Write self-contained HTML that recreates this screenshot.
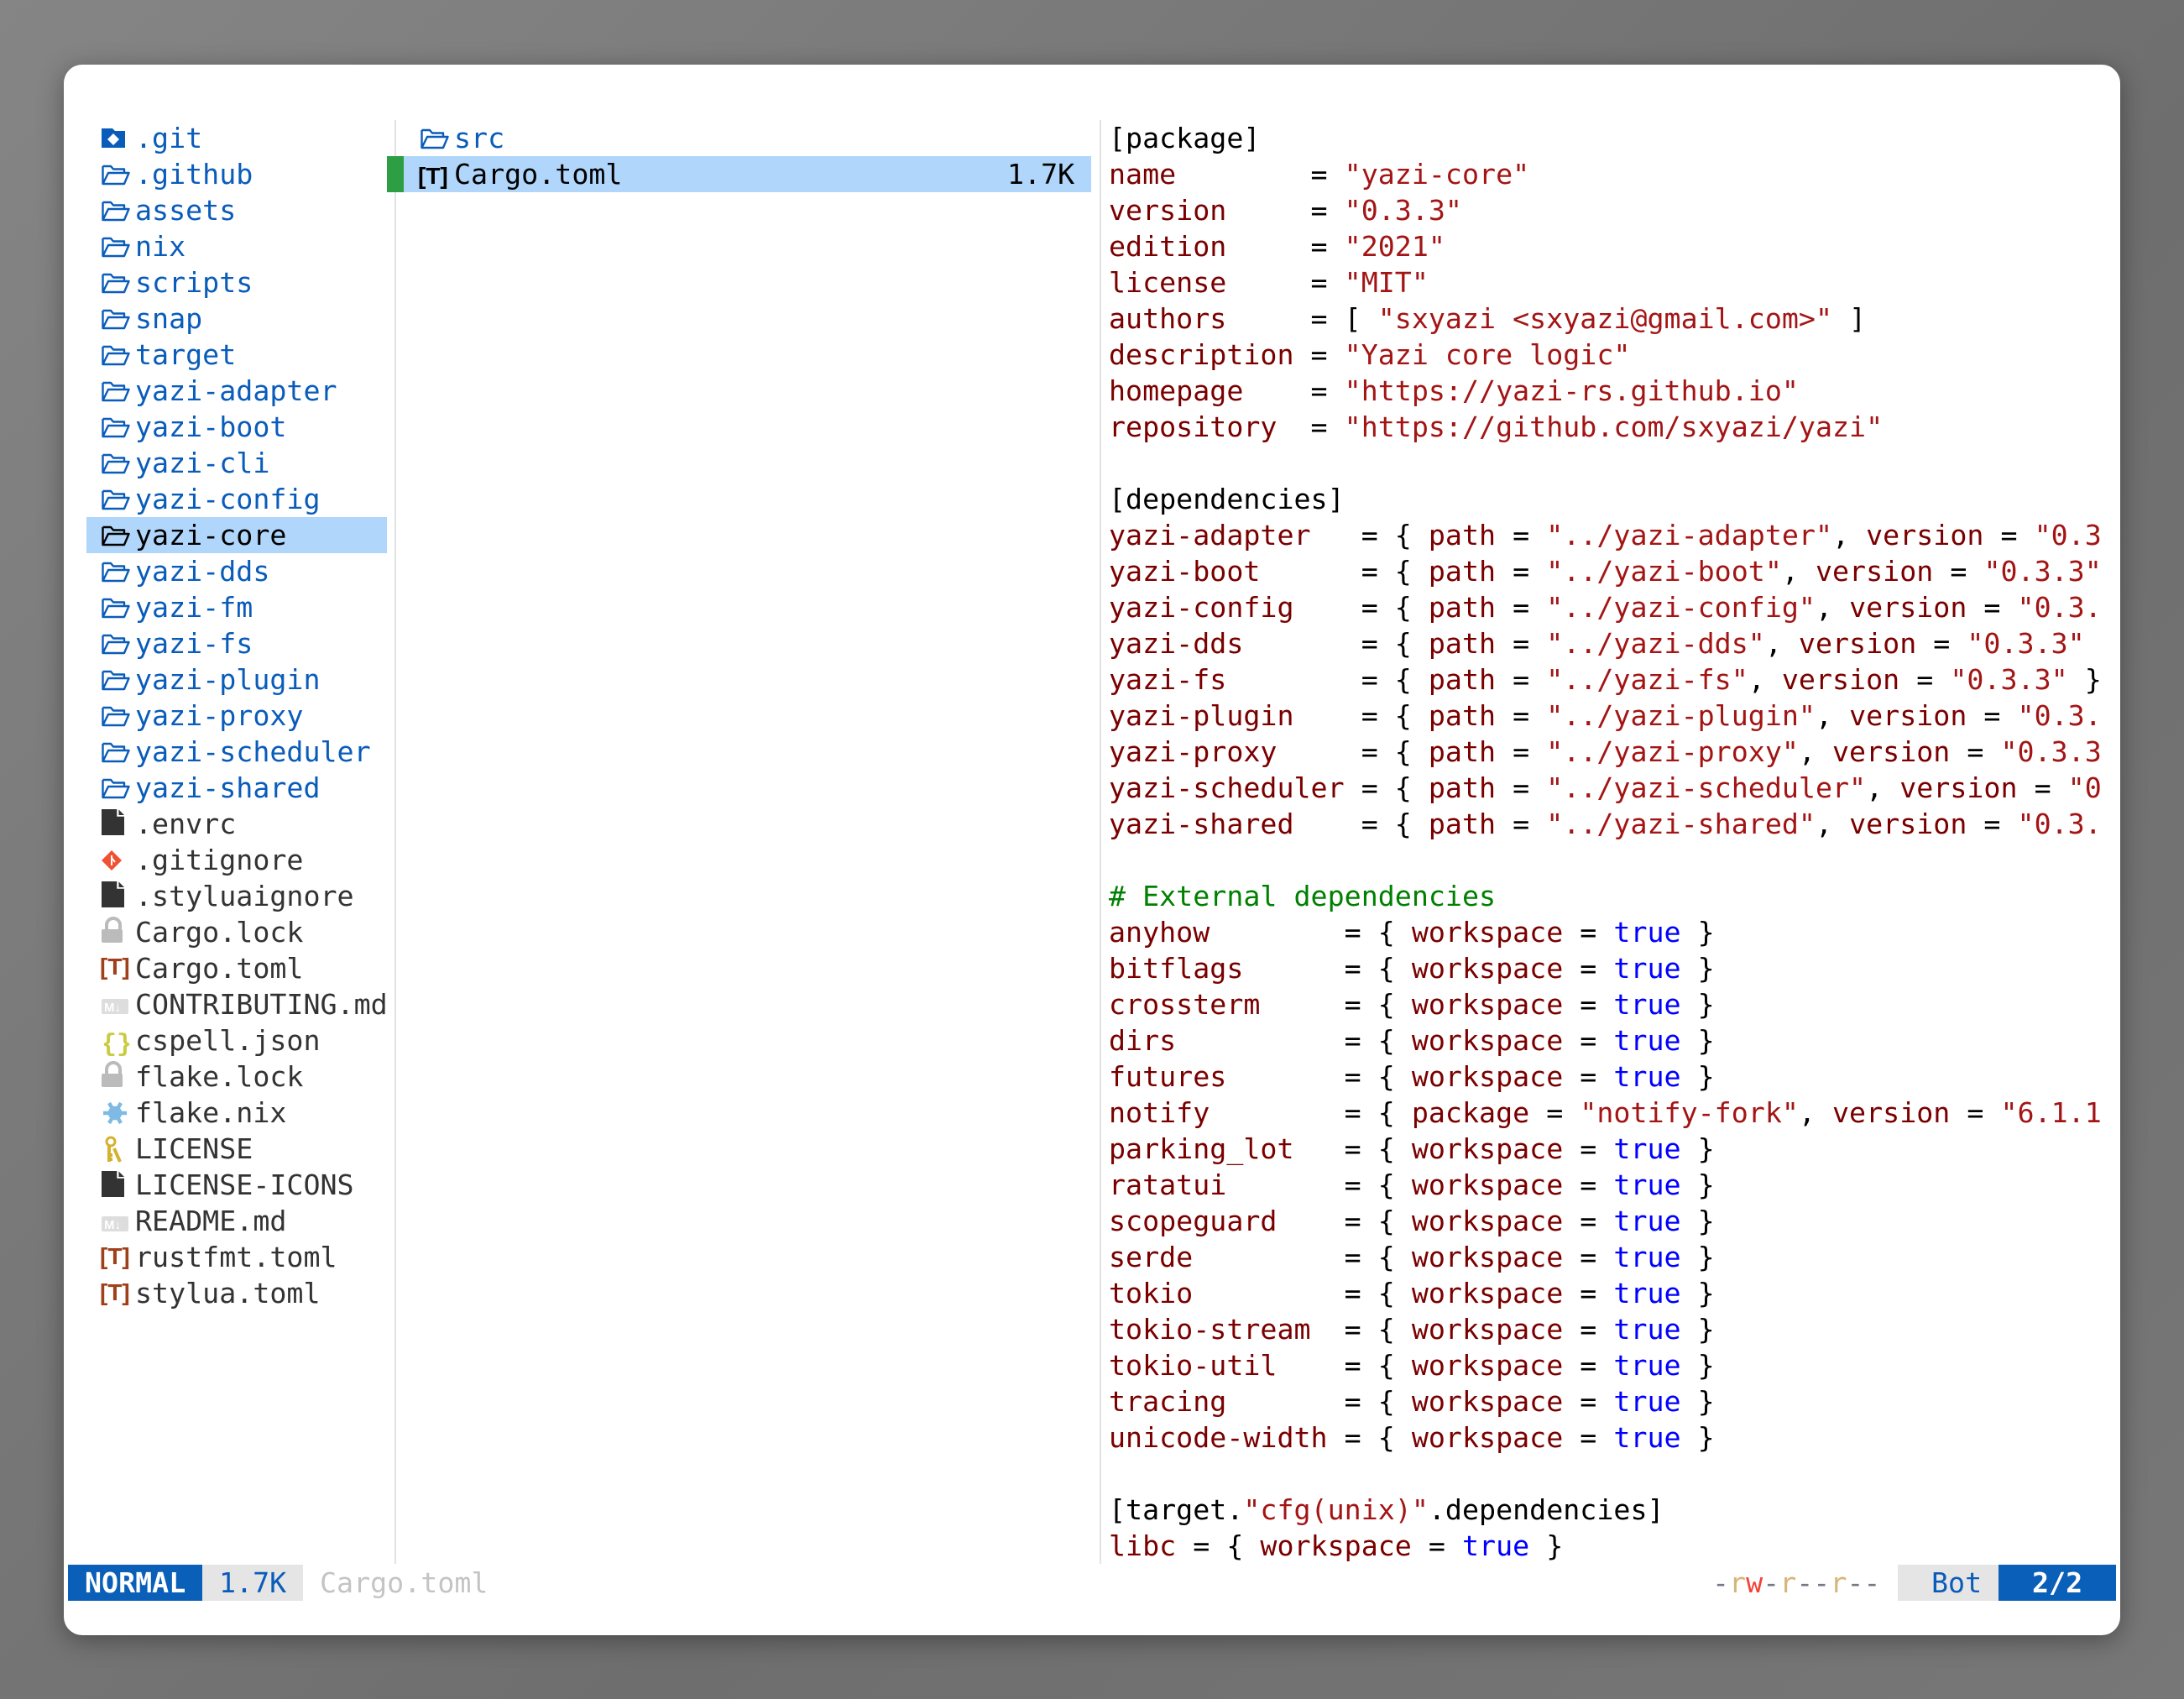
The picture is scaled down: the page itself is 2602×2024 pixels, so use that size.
<!DOCTYPE html>
<html><head><meta charset="utf-8">
<style>
html,body{margin:0;padding:0}
body{width:2602px;height:2024px;background:linear-gradient(135deg,#858585,#6e6e6e 60%,#777);position:relative;overflow:hidden;font-family:"Liberation Mono","DejaVu Sans Mono",monospace;}
.win{position:absolute;left:76px;top:77px;width:2450px;height:1871px;background:#fff;border-radius:22px;box-shadow:0 6px 30px rgba(0,0,0,.35);overflow:hidden}
.t{position:absolute;font-size:33.3px;line-height:43px;white-space:pre;margin:0}
.d{color:#0a5cba}
.f{color:#333}
.k{color:#7a0000}.s{color:#a31515}.b{color:#0000ff}.c{color:#008000}.n{color:#000}
svg{position:absolute}
</style></head><body>
<div class="win"></div>

<div style="position:absolute;left:103px;top:616px;width:358px;height:43px;background:#b0d6fb"></div>
<div style="position:absolute;left:470px;top:143px;width:2px;height:1720px;background:#e2e2e2"></div>
<div style="position:absolute;left:1310px;top:143px;width:2px;height:1720px;background:#e2e2e2"></div>
<div style="position:absolute;left:461px;top:186px;width:20px;height:43px;background:#2e9e44"></div>
<div style="position:absolute;left:481px;top:186px;width:819px;height:43px;background:#b0d6fb"></div>

<svg width="2602" height="2024" style="left:0;top:0">
<defs>
<g id="fold"><path d="M1.5 4 V25 H27 L32.5 12 H8 L1.5 25 M1.5 4 H11 L14 7.5 H27 V12" fill="none" stroke="#0a5cba" stroke-width="2.4" stroke-linejoin="round"/></g>
<g id="file"><path d="M0 0 H19 L27 8 V31 H0 Z" fill="#333"/><path d="M19 0 V8 H27" fill="#fff" stroke="#fff" stroke-width="1.5"/><path d="M20.5 0.5 L27 7 H20.5Z" fill="#333"/></g>
<g id="tom"><text x="0" y="24" font-family="Liberation Sans,sans-serif" font-weight="bold" font-size="28" fill="#a0401a">[T]</text></g>
<g id="md"><rect x="0" y="0" width="32" height="18" rx="2" fill="#ddd"/><text x="3" y="15" font-family="Liberation Sans,sans-serif" font-weight="bold" font-size="15" fill="#fff">M↓</text></g>
<g id="lock"><path d="M6 13 V8 A8 8 0 0 1 22 8 V13" fill="none" stroke="#bbb" stroke-width="4"/><rect x="0" y="13" width="25" height="16" rx="2" fill="#bbb"/></g>
</defs>
<g transform="translate(121,153)"><path d="M0 0 H13 L16 3 H28 V23 H0Z" fill="#0a5cba"/><path d="M14 6 L21 13 L14 20 L7 13Z" fill="#fff"/></g>
<use href="#fold" transform="translate(121,194)"/>
<use href="#fold" transform="translate(121,237)"/>
<use href="#fold" transform="translate(121,280)"/>
<use href="#fold" transform="translate(121,323)"/>
<use href="#fold" transform="translate(121,366)"/>
<use href="#fold" transform="translate(121,409)"/>
<use href="#fold" transform="translate(121,452)"/>
<use href="#fold" transform="translate(121,495)"/>
<use href="#fold" transform="translate(121,538)"/>
<use href="#fold" transform="translate(121,581)"/>
<g transform="translate(121,624)"><path d="M1.5 4 V25 H27 L32.5 12 H8 L1.5 25 M1.5 4 H11 L14 7.5 H27 V12" fill="none" stroke="#000" stroke-width="2.4" stroke-linejoin="round"/></g>
<use href="#fold" transform="translate(121,667)"/>
<use href="#fold" transform="translate(121,710)"/>
<use href="#fold" transform="translate(121,753)"/>
<use href="#fold" transform="translate(121,796)"/>
<use href="#fold" transform="translate(121,839)"/>
<use href="#fold" transform="translate(121,882)"/>
<use href="#fold" transform="translate(121,925)"/>
<use href="#file" transform="translate(121,964)"/>
<g transform="translate(121,1013)"><path d="M12 0 L24 12 L12 24 L0 12Z" fill="#f05033"/><path d="M12 6 V18 M12 9 L16 14" stroke="#fff" stroke-width="2"/></g>
<use href="#file" transform="translate(121,1050)"/>
<use href="#lock" transform="translate(121,1094)"/>
<use href="#tom" transform="translate(119,1137)"/>
<use href="#md" transform="translate(121,1190)"/>
<text x="121" y="1252" font-family="Liberation Mono,monospace" font-weight="bold" font-size="30" fill="#cbcb41">{}</text>
<use href="#lock" transform="translate(121,1266)"/>
<g transform="translate(137,1326)" stroke="#7ebae4" stroke-width="4.5" fill="none"><path d="M-14 0 H14 M-7 -12 L7 12 M7 -12 L-7 12"/><circle r="6"/></g>
<g transform="translate(124,1354)"><circle cx="8" cy="6" r="5" fill="none" stroke="#d4b12e" stroke-width="3"/><path d="M6 11 V30 M6 22 H10 M6 27 H10 M12 14 L19 30" stroke="#d4b12e" stroke-width="4"/></g>
<use href="#file" transform="translate(121,1395)"/>
<use href="#md" transform="translate(121,1449)"/>
<use href="#tom" transform="translate(119,1482)"/>
<use href="#tom" transform="translate(119,1525)"/>
<use href="#fold" transform="translate(501,151)"/>
<text x="498" y="219" font-family="Liberation Sans,sans-serif" font-weight="bold" font-size="28" fill="#000">[T]</text>
</svg>

<pre class="t" style="left:161px;top:143px"><span class="d">.git
.github
assets
nix
scripts
snap
target
yazi-adapter
yazi-boot
yazi-cli
yazi-config
</span><span class="n">yazi-core</span><span class="d">
yazi-dds
yazi-fm
yazi-fs
yazi-plugin
yazi-proxy
yazi-scheduler
yazi-shared
</span><span class="f">.envrc
.gitignore
.styluaignore
Cargo.lock
Cargo.toml
CONTRIBUTING.md
cspell.json
flake.lock
flake.nix
LICENSE
LICENSE-ICONS
README.md
rustfmt.toml
stylua.toml</span></pre>

<pre class="t" style="left:541px;top:143px"><span class="d">src</span>
<span class="n">Cargo.toml</span></pre>
<pre class="t n" style="left:1200px;top:186px">1.7K</pre>

<div style="position:absolute;left:1321px;top:143px;width:1185px;height:1720px;overflow:hidden">
<pre class="t n" style="left:0;top:0">[package]
<span class="k">name</span>        = <span class="s">"yazi-core"</span>
<span class="k">version</span>     = <span class="s">"0.3.3"</span>
<span class="k">edition</span>     = <span class="s">"2021"</span>
<span class="k">license</span>     = <span class="s">"MIT"</span>
<span class="k">authors</span>     = [ <span class="s">"sxyazi &lt;sxyazi@gmail.com&gt;"</span> ]
<span class="k">description</span> = <span class="s">"Yazi core logic"</span>
<span class="k">homepage</span>    = <span class="s">"https://yazi-rs.github.io"</span>
<span class="k">repository</span>  = <span class="s">"https://github.com/sxyazi/yazi"</span>

[dependencies]
<span class="k">yazi-adapter</span>   = { <span class="k">path</span> = <span class="s">"../yazi-adapter"</span>, <span class="k">version</span> = <span class="s">"0.3.3"</span> }
<span class="k">yazi-boot</span>      = { <span class="k">path</span> = <span class="s">"../yazi-boot"</span>, <span class="k">version</span> = <span class="s">"0.3.3"</span> }
<span class="k">yazi-config</span>    = { <span class="k">path</span> = <span class="s">"../yazi-config"</span>, <span class="k">version</span> = <span class="s">"0.3.3"</span> }
<span class="k">yazi-dds</span>       = { <span class="k">path</span> = <span class="s">"../yazi-dds"</span>, <span class="k">version</span> = <span class="s">"0.3.3"</span> }
<span class="k">yazi-fs</span>        = { <span class="k">path</span> = <span class="s">"../yazi-fs"</span>, <span class="k">version</span> = <span class="s">"0.3.3"</span> }
<span class="k">yazi-plugin</span>    = { <span class="k">path</span> = <span class="s">"../yazi-plugin"</span>, <span class="k">version</span> = <span class="s">"0.3.3"</span> }
<span class="k">yazi-proxy</span>     = { <span class="k">path</span> = <span class="s">"../yazi-proxy"</span>, <span class="k">version</span> = <span class="s">"0.3.3"</span> }
<span class="k">yazi-scheduler</span> = { <span class="k">path</span> = <span class="s">"../yazi-scheduler"</span>, <span class="k">version</span> = <span class="s">"0.3.3"</span> }
<span class="k">yazi-shared</span>    = { <span class="k">path</span> = <span class="s">"../yazi-shared"</span>, <span class="k">version</span> = <span class="s">"0.3.3"</span> }

<span class="c"># External dependencies</span>
<span class="k">anyhow</span>        = { <span class="k">workspace</span> = <span class="b">true</span> }
<span class="k">bitflags</span>      = { <span class="k">workspace</span> = <span class="b">true</span> }
<span class="k">crossterm</span>     = { <span class="k">workspace</span> = <span class="b">true</span> }
<span class="k">dirs</span>          = { <span class="k">workspace</span> = <span class="b">true</span> }
<span class="k">futures</span>       = { <span class="k">workspace</span> = <span class="b">true</span> }
<span class="k">notify</span>        = { <span class="k">package</span> = <span class="s">"notify-fork"</span>, <span class="k">version</span> = <span class="s">"6.1.1"</span> }
<span class="k">parking_lot</span>   = { <span class="k">workspace</span> = <span class="b">true</span> }
<span class="k">ratatui</span>       = { <span class="k">workspace</span> = <span class="b">true</span> }
<span class="k">scopeguard</span>    = { <span class="k">workspace</span> = <span class="b">true</span> }
<span class="k">serde</span>         = { <span class="k">workspace</span> = <span class="b">true</span> }
<span class="k">tokio</span>         = { <span class="k">workspace</span> = <span class="b">true</span> }
<span class="k">tokio-stream</span>  = { <span class="k">workspace</span> = <span class="b">true</span> }
<span class="k">tokio-util</span>    = { <span class="k">workspace</span> = <span class="b">true</span> }
<span class="k">tracing</span>       = { <span class="k">workspace</span> = <span class="b">true</span> }
<span class="k">unicode-width</span> = { <span class="k">workspace</span> = <span class="b">true</span> }

[target.<span class="s">"cfg(unix)"</span>.dependencies]
<span class="k">libc</span> = { <span class="k">workspace</span> = <span class="b">true</span> }</pre>
</div>

<div style="position:absolute;left:81px;top:1864px;width:160px;height:43px;background:#0a5fb8"></div>
<div style="position:absolute;left:241px;top:1864px;width:120px;height:43px;background:#e5e5e5"></div>
<pre class="t" style="left:101px;top:1864px;color:#fff;font-weight:bold">NORMAL</pre>
<pre class="t" style="left:261px;top:1864px;color:#0a5cba">1.7K</pre>
<pre class="t" style="left:381px;top:1864px;color:#c4c4c4">Cargo.toml</pre>
<pre class="t" style="left:2040px;top:1864px"><span style="color:#737a85">-</span><span style="color:#d5b57a">r</span><span style="color:#f44336">w</span><span style="color:#737a85">-</span><span style="color:#d5b57a">r</span><span style="color:#737a85">--</span><span style="color:#d5b57a">r</span><span style="color:#737a85">--</span></pre>
<div style="position:absolute;left:2261px;top:1864px;width:120px;height:43px;background:#e5e5e5"></div>
<div style="position:absolute;left:2381px;top:1864px;width:140px;height:43px;background:#0a5fb8"></div>
<pre class="t" style="left:2301px;top:1864px;color:#0a5cba">Bot</pre>
<pre class="t" style="left:2421px;top:1864px;color:#fff;font-weight:bold">2/2</pre>
</body></html>
